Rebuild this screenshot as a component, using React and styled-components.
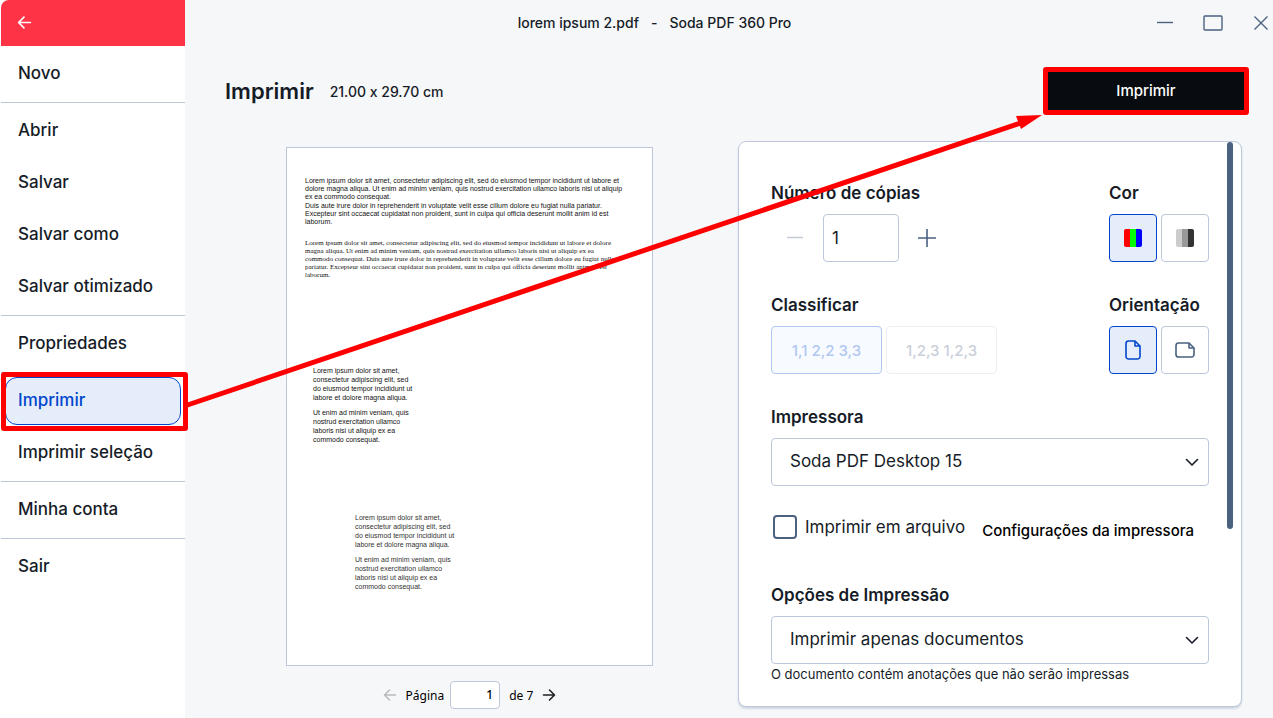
import React from "react";
import styled, { createGlobalStyle, css } from "styled-components";

const c = {
  ink: "#161c27",
  line: "#bcc8da",
  steel: "#4a6180",
  blue: "#0046cc",
  blueSoft: "#e5ecfa",
  canvas: "#f6f7f9",
  mark: "#ff0000",
};

const GlobalStyle = createGlobalStyle`
  * { box-sizing: border-box; }
  body {
    margin: 0;
    background: ${c.canvas};
    color: ${c.ink};
    font-family: Inter, "Liberation Sans", sans-serif;
    font-size: 17px;
    font-feature-settings: "calt" 0;
  }
  button, input, select { font: inherit; font-feature-settings: inherit; color: inherit; margin: 0; }
  button { cursor: pointer; padding: 0; background: none; border: 0; }
  svg { display: block; }
`;

const Window = styled.div`
  position: relative;
  display: grid;
  grid-template-columns: 185px minmax(0, 1fr);
  min-height: 100vh;
`;

const Sidebar = styled.nav`
  background: #fff;
  padding-left: 1px;
`;

const BackBar = styled.div`
  display: flex;
  align-items: center;
  height: 46px;
  padding: 0 16px 2px;
  background: #ff3346;
  border-top-left-radius: 8px;
`;

const BackButton = styled.button`
  color: #fff;
`;

const Group = styled.div`
  display: flex;
  flex-direction: column;
  gap: 4px;
  padding: 4px;
  border-bottom: ${(p) => (p.$last ? 0 : 1)}px solid ${c.line};
`;

const marked = css`
  position: relative;
  &::after {
    content: "";
    position: absolute;
    inset: ${(p) => p.$inset || "-5px"};
    border: 5px solid ${c.mark};
    border-radius: 3px;
    pointer-events: none;
  }
`;

const Item = styled.button`
  height: 48px;
  padding: 0 12px 2px;
  text-align: left;
  font-weight: 500;
  border: 1px solid transparent;
  border-radius: 12px;
  ${(p) =>
    p.$active &&
    css`
      color: ${c.blue};
      background: ${c.blueSoft};
      border-color: ${c.blue};
      ${marked}
    `}
`;

const Main = styled.main`
  display: flex;
  flex-direction: column;
`;

const TitleBar = styled.header`
  display: flex;
  align-items: center;
  height: 46px;
`;

const Title = styled.div`
  flex: 1;
  display: flex;
  justify-content: center;
  gap: 12px;
  padding-bottom: 2px;
  font-size: 14px;
  font-weight: 500;
`;

const Controls = styled.div`
  display: flex;
  gap: 24px;
  padding-left: 29px;
`;

const WinButton = styled.button`
  display: grid;
  place-items: center;
  width: 24px;
  height: 24px;
  color: ${c.steel};
`;

const Head = styled.div`
  display: flex;
  align-items: center;
  gap: 16px;
  padding: 26px 29px 31px 40px;
`;

const Heading = styled.h1`
  margin: 0;
  font-size: 22px;
  line-height: 32px;
  font-weight: 600;
`;

const PaperSize = styled.span`
  flex: 1;
  font-size: 14px;
  font-weight: 500;
`;

const PrintButton = styled.button`
  width: 196px;
  height: 38px;
  color: #fff;
  background: #080c11;
  font-size: 15px;
  font-weight: 500;
  padding-bottom: 2px;
  ${marked}
`;

const Body = styled.div`
  display: grid;
  grid-template-columns: minmax(0, 537fr) minmax(0, 504fr);
  align-items: start;
  padding: 0 31px 0 16px;
`;

const Preview = styled.section`
  display: flex;
  flex-direction: column;
  align-items: center;
  gap: 15px;
  padding-top: 6px;
`;

const Paper = styled.article`
  width: 367px;
  max-width: 100%;
  aspect-ratio: 367 / 519;
  padding: 29px 0 0 18px;
  overflow: hidden;
  background: #fff;
  border: 1px solid ${c.line};
`;

const Passage = styled.p`
  margin: 0 0 ${(p) => p.$after || 0}px ${(p) => p.$indent || 0}px;
  font-family: ${(p) =>
    p.$serif ? '"Liberation Serif", serif' : '"Liberation Sans", sans-serif'};
  font-size: 7px;
  line-height: ${(p) => p.$leading || 8}px;
  color: ${(p) => (p.$scan ? "#333" : "#111")};
  white-space: pre;
`;

const Pager = styled.div`
  display: flex;
  align-items: center;
  gap: 9px;
  font-family: "Noto Sans", sans-serif;
  font-size: 12px;
  color: #000;
`;

const PagerButton = styled.button`
  color: #222;
  &:disabled { color: #b8babd; }
`;

const PageField = styled.label`
  display: flex;
  align-items: center;
  gap: 6px;
`;

const PageInput = styled.input`
  width: 50px;
  height: 28px;
  padding: 0 6px 2px;
  text-align: right;
  font-weight: 500;
  background: #fff;
  border: 1px solid ${c.line};
  border-radius: 4px;
`;

const Panel = styled.section`
  position: relative;
  display: flex;
  flex-direction: column;
  gap: 31px;
  padding: 39px 32px 23px;
  background: #fff;
  border: 1px solid ${c.line};
  border-radius: 8px;
  box-shadow: 0 2px 2px #cfd7e4;
`;

const ScrollThumb = styled.div`
  position: absolute;
  top: 0;
  right: 8px;
  width: 6px;
  height: 387px;
  border-radius: 3px;
  background: ${c.steel};
`;

const Columns = styled.div`
  display: grid;
  grid-template-columns: minmax(0, 1fr) 100px;
`;

const Field = styled.div`
  display: flex;
  flex-direction: column;
  gap: 9px;
`;

const Label = styled.label`
  font-weight: 600;
  line-height: 24px;
`;

const Row = styled.div`
  display: flex;
  gap: 4px;
`;

const StepButton = styled.button`
  display: grid;
  place-items: center;
  width: 48px;
  height: 48px;
  color: ${c.steel};
  &:disabled { color: #c3cbd7; }
`;

const CopiesInput = styled.input`
  width: 76px;
  height: 48px;
  padding: 0 8px;
  background: #fff;
  border: 1px solid ${c.line};
  border-radius: 4px;
`;

const Choice = styled.button`
  display: grid;
  place-items: center;
  width: ${(p) => (p.$wide ? 111 : 48)}px;
  height: 48px;
  font-size: 15px;
  font-weight: 500;
  border: 1px solid ${(p) => (p.$on ? c.blue : c.line)};
  border-radius: 4px;
  color: ${(p) => (p.$on ? c.blue : c.steel)};
  background: ${(p) => (p.$on ? c.blueSoft : "#fff")};
  &:disabled {
    color: ${(p) => (p.$on ? "#b2c8f1" : "#c9d0da")};
    border-color: ${(p) => (p.$on ? "#b2c8f1" : "#ebeef3")};
    background: ${(p) => (p.$on ? "#f7faff" : "#fff")};
  }
`;

const SelectBox = styled.div`
  position: relative;
  svg {
    position: absolute;
    right: 9px;
    top: 16px;
    pointer-events: none;
  }
`;

const Select = styled.select`
  appearance: none;
  width: 100%;
  height: 48px;
  padding: 0 40px 2px 18px;
  background: #fff;
  border: 1px solid ${c.line};
  border-radius: 4px;
`;

const FileRow = styled.div`
  display: flex;
  align-items: flex-start;
  justify-content: space-between;
  height: 37px;
  margin-top: -2px;
  padding: 0 15px 0 2px;
`;

const Check = styled.label`
  display: flex;
  align-items: center;
  gap: 8px;
  line-height: 24px;
  input {
    appearance: none;
    width: 24px;
    height: 24px;
    border: 2px solid ${c.steel};
    border-radius: 4px;
    background: #fff;
  }
`;

const SettingsLink = styled.a`
  padding-top: 7px;
  font-size: 15px;
  line-height: 18px;
  font-weight: 500;
  color: #000;
  text-decoration: none;
`;

const Note = styled.p`
  margin: -8px 0 0;
  font-size: 13px;
  line-height: 18px;
`;

const ArrowLayer = styled.svg`
  position: absolute;
  left: 0;
  top: 0;
  pointer-events: none;
`;

const Arrow = ({ flip, size = 14 }) => (
  <svg width={size} height={size} viewBox="0 0 14 14" fill="none" stroke="currentColor"
    strokeWidth="1.6" strokeLinecap="round" strokeLinejoin="round"
    transform={flip ? "scale(-1 1)" : undefined}>
    <path d="M12.5 7H1.5M6.5 2L1.5 7l5 5" />
  </svg>
);

const Swatch = ({ colors }) => (
  <svg width="18" height="18" viewBox="0 0 18 18">
    <path d="M2 0h4v18H2a2 2 0 0 1-2-2V2a2 2 0 0 1 2-2z" fill={colors[0]} />
    <path d="M6 0h6v18H6z" fill={colors[1]} />
    <path d="M12 0h4a2 2 0 0 1 2 2v14a2 2 0 0 1-2 2h-4z" fill={colors[2]} />
  </svg>
);

const Portrait = () => (
  <svg width="16" height="20" viewBox="0 0 16 20" fill="none" stroke="currentColor" strokeWidth="1.6" strokeLinejoin="round">
    <path d="M3.6 1H10l5 5v10.400A2.600 2.600 0 0 1 12.400 19H3.600A2.600 2.600 0 0 1 1 16.400V3.600A2.600 2.600 0 0 1 3.600 1z" />
    <path d="M10 1v5h5" />
  </svg>
);

const Landscape = () => (
  <svg width="20" height="16" viewBox="0 0 20 16" fill="none" stroke="currentColor" strokeWidth="1.6" strokeLinejoin="round">
    <path d="M3.600 1H14l5 5v6.400A2.600 2.600 0 0 1 16.400 15H3.600A2.600 2.600 0 0 1 1 12.400V3.600A2.600 2.600 0 0 1 3.600 1z" />
    <path d="M14 1v5h5" />
  </svg>
);

const Chevron = () => (
  <svg width="16" height="16" viewBox="0 0 16 16" fill="none" stroke="#161c27" strokeWidth="1.6" strokeLinecap="round" strokeLinejoin="round">
    <path d="M2.500 5.500L8 11l5.500-5.500" />
  </svg>
);

const groups = [
  ["Novo"],
  ["Abrir", "Salvar", "Salvar como", "Salvar otimizado"],
  ["Propriedades"],
  ["Imprimir", "Imprimir seleção"],
  ["Minha conta"],
  ["Sair"],
];

const sansTop = `Lorem ipsum dolor sit amet, consectetur adipiscing elit, sed do eiusmod tempor incididunt ut labore et
dolore magna aliqua. Ut enim ad minim veniam, quis nostrud exercitation ullamco laboris nisi ut aliquip
ex ea commodo consequat.`;

const sansBottom = `Duis aute irure dolor in reprehenderit in voluptate velit esse cillum dolore eu fugiat nulla pariatur.
Excepteur sint occaecat cupidatat non proident, sunt in culpa qui officia deserunt mollit anim id est
laborum.`;

const serifText = `Lorem ipsum dolor sit amet, consectetur adipiscing elit, sed do eiusmod tempor incididunt ut labore et dolore
magna aliqua. Ut enim ad minim veniam, quis nostrud exercitation ullamco laboris nisi ut aliquip ex ea
commodo consequat. Duis aute irure dolor in reprehenderit in voluptate velit esse cillum dolore eu fugiat nulla
pariatur. Excepteur sint occaecat cupidatat non proident, sunt in culpa qui officia deserunt mollit anim id est
laborum.`;

const blockA = `Lorem ipsum dolor sit amet,
consectetur adipiscing elit, sed
do eiusmod tempor incididunt ut
labore et dolore magna aliqua.`;

const blockB = `Ut enim ad minim veniam, quis
nostrud exercitation ullamco
laboris nisi ut aliquip ex ea
commodo consequat.`;

export default function App() {
  return (
    <>
      <GlobalStyle />
      <Window>
        <Sidebar>
          <BackBar>
            <BackButton aria-label="Voltar"><Arrow size={15} /></BackButton>
          </BackBar>
          {groups.map((items, i) => (
            <Group key={i} $last={i === groups.length - 1}>
              {items.map((t) => (
                <Item key={t} $active={t === "Imprimir"} $inset="-6px -8px -7px -5px">{t}</Item>
              ))}
            </Group>
          ))}
        </Sidebar>

        <Main>
          <TitleBar>
            <Title>
              <span>lorem ipsum 2.pdf</span>
              <span>-</span>
              <span>Soda PDF 360 Pro</span>
            </Title>
            <Controls>
              <WinButton aria-label="Minimizar">
                <svg width="16" height="16" viewBox="0 0 16 16" stroke="currentColor" strokeWidth="1.400"><path d="M0 7.500h16" /></svg>
              </WinButton>
              <WinButton aria-label="Maximizar">
                <svg width="20" height="16" viewBox="0 0 20 16" fill="none" stroke="currentColor" strokeWidth="1.400"><rect x="1" y="1" width="18" height="14" rx="1" /></svg>
              </WinButton>
              <WinButton aria-label="Fechar">
                <svg width="16" height="16" viewBox="0 0 16 16" stroke="currentColor" strokeWidth="1.400"><path d="M1.500 1.500l13 13M14.500 1.500l-13 13" /></svg>
              </WinButton>
            </Controls>
          </TitleBar>

          <Head>
            <Heading>Imprimir</Heading>
            <PaperSize>21.00 x 29.70 cm</PaperSize>
            <PrintButton>Imprimir</PrintButton>
          </Head>

          <Body>
            <Preview>
              <Paper>
                <Passage $after={1}>{sansTop}</Passage>
                <Passage $after={13}>{sansBottom}</Passage>
                <Passage $serif $after={87}>{serifText}</Passage>
                <Passage $indent={8} $leading={9} $after={6}>{blockA}</Passage>
                <Passage $indent={8} $leading={9} $after={69}>{blockB}</Passage>
                <Passage $scan $indent={50} $leading={9} $after={6}>{blockA}</Passage>
                <Passage $scan $indent={50} $leading={9}>{blockB}</Passage>
              </Paper>
              <Pager>
                <PagerButton disabled aria-label="Página anterior"><Arrow /></PagerButton>
                <PageField>Página <PageInput defaultValue="1" /></PageField>
                <span>de 7</span>
                <PagerButton aria-label="Próxima página"><Arrow flip /></PagerButton>
              </Pager>
            </Preview>

            <Panel>
              <Columns>
                <Field>
                  <Label htmlFor="copies">Número de cópias</Label>
                  <Row>
                    <StepButton disabled aria-label="Menos">
                      <svg width="18" height="18" viewBox="0 0 18 18" stroke="currentColor" strokeWidth="1.500"><path d="M1 8.500h16" /></svg>
                    </StepButton>
                    <CopiesInput id="copies" defaultValue="1" />
                    <StepButton aria-label="Mais">
                      <svg width="18" height="18" viewBox="0 0 18 18" stroke="currentColor" strokeWidth="1.600"><path d="M0 9h18M9 0v18" /></svg>
                    </StepButton>
                  </Row>
                </Field>
                <Field>
                  <Label as="span">Cor</Label>
                  <Row>
                    <Choice $on aria-label="Colorido"><Swatch colors={["#f00", "#0f0", "#00f"]} /></Choice>
                    <Choice aria-label="Tons de cinza"><Swatch colors={["#ccc", "#999", "#333"]} /></Choice>
                  </Row>
                </Field>
              </Columns>

              <Columns>
                <Field>
                  <Label as="span">Classificar</Label>
                  <Row>
                    <Choice $wide $on disabled>1,1 2,2 3,3</Choice>
                    <Choice $wide disabled>1,2,3 1,2,3</Choice>
                  </Row>
                </Field>
                <Field>
                  <Label as="span">Orientação</Label>
                  <Row>
                    <Choice $on aria-label="Retrato"><Portrait /></Choice>
                    <Choice aria-label="Paisagem"><Landscape /></Choice>
                  </Row>
                </Field>
              </Columns>

              <Field>
                <Label htmlFor="printer">Impressora</Label>
                <SelectBox>
                  <Select id="printer"><option>Soda PDF Desktop 15</option></Select>
                  <Chevron />
                </SelectBox>
              </Field>

              <FileRow>
                <Check><input type="checkbox" />Imprimir em arquivo</Check>
                <SettingsLink href="#settings">Configurações da impressora</SettingsLink>
              </FileRow>

              <Field>
                <Label htmlFor="options">Opções de Impressão</Label>
                <SelectBox>
                  <Select id="options"><option>Imprimir apenas documentos</option></Select>
                  <Chevron />
                </SelectBox>
                <Note>O documento contém anotações que não serão impressas</Note>
              </Field>
              <ScrollThumb />
            </Panel>
          </Body>
        </Main>

        <ArrowLayer width="1050" height="420" viewBox="0 0 1050 420">
          <path d="M186 405.500L1022 122.500" stroke={c.mark} strokeWidth="5" />
          <path d="M1042 115l-26 1 5 13z" fill={c.mark} />
        </ArrowLayer>
      </Window>
    </>
  );
}
